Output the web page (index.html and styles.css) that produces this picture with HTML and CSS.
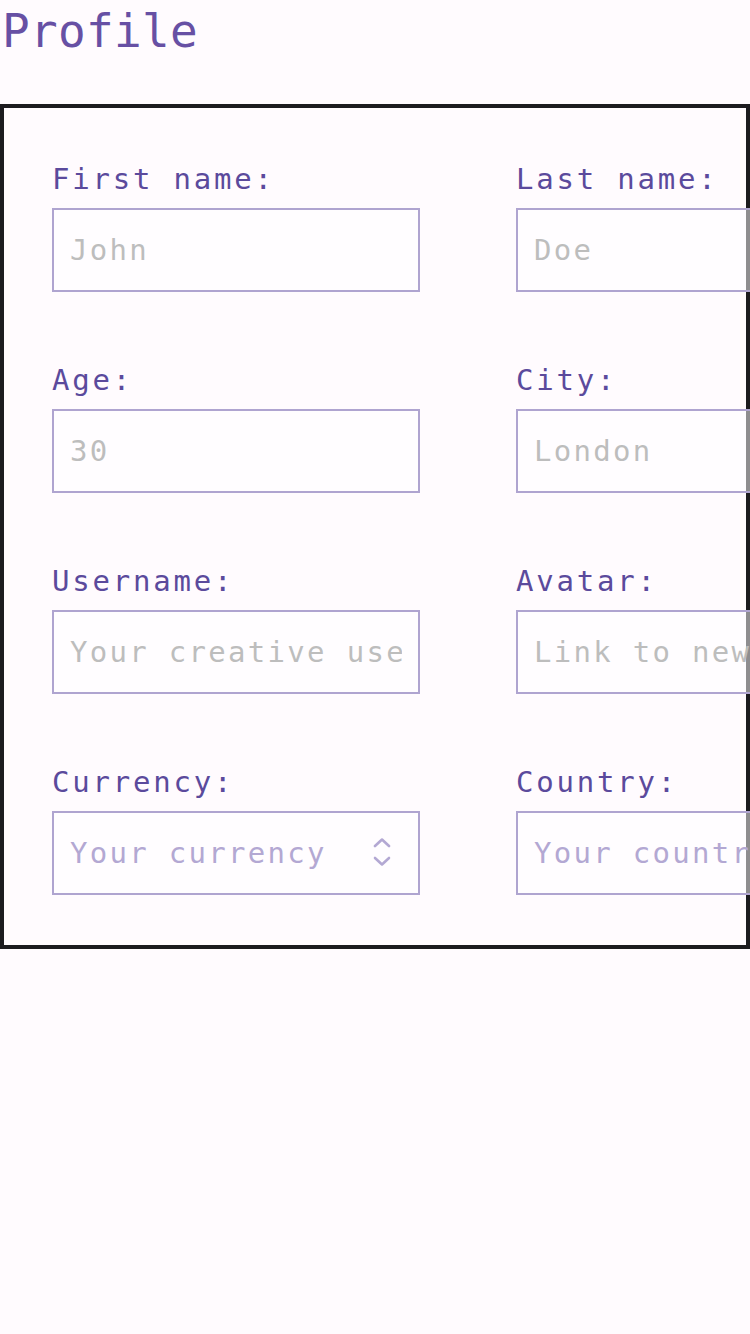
FILE: index.html
```html
<!DOCTYPE html>
<html lang="en">
<head>
  <meta charset="UTF-8">
  <meta name="viewport" content="width=device-width, initial-scale=1.0">
  <title>Profile</title>
  <link rel="stylesheet" href="styles.css">
</head>
<body>
  <h1 class="page-title">Profile</h1>

  <form class="profile-card">
    <!-- Row 1 -->
    <div class="field">
      <label class="field-label" for="first-name">First name:</label>
      <input class="field-input" id="first-name" type="text" placeholder="John">
    </div>
    <div class="field">
      <label class="field-label" for="last-name">Last name:</label>
      <input class="field-input" id="last-name" type="text" placeholder="Doe">
    </div>

    <!-- Row 2 -->
    <div class="field">
      <label class="field-label" for="age">Age:</label>
      <input class="field-input" id="age" type="text" placeholder="30">
    </div>
    <div class="field">
      <label class="field-label" for="city">City:</label>
      <input class="field-input" id="city" type="text" placeholder="London">
    </div>

    <!-- Row 3 -->
    <div class="field">
      <label class="field-label" for="username">Username:</label>
      <input class="field-input" id="username" type="text" placeholder="Your creative username">
    </div>
    <div class="field">
      <label class="field-label" for="avatar">Avatar:</label>
      <input class="field-input" id="avatar" type="text" placeholder="Link to new avatar">
    </div>

    <!-- Row 4: selects -->
    <div class="field">
      <label class="field-label" for="currency">Currency:</label>
      <div class="select-wrap">
        <select class="field-input field-select" id="currency">
          <option value="" selected disabled>Your currency</option>
          <option>GBP</option>
          <option>EUR</option>
          <option>USD</option>
        </select>
        <svg class="select-icon" width="18" height="30" viewBox="0 0 18 30" aria-hidden="true">
          <polyline points="2,8 9,1.5 16,8" />
          <polyline points="2,20 9,26.5 16,20" />
        </svg>
      </div>
    </div>
    <div class="field">
      <label class="field-label" for="country">Country:</label>
      <div class="select-wrap">
        <select class="field-input field-select" id="country">
          <option value="" selected disabled>Your country</option>
          <option>United Kingdom</option>
          <option>France</option>
          <option>Germany</option>
        </select>
        <svg class="select-icon" width="18" height="30" viewBox="0 0 18 30" aria-hidden="true">
          <polyline points="2,8 9,1.5 16,8" />
          <polyline points="2,20 9,26.5 16,20" />
        </svg>
      </div>
    </div>
  </form>
</body>
</html>
```

FILE: styles.css
```css
/* Page */
html {
  overflow-x: hidden;
}

body {
  margin: 0;
  background: #fffbfe;
  font-family: 'DejaVu Sans Mono', 'Liberation Mono', monospace;
  color: #5b4a9c;
}

/* Title */
.page-title {
  margin: 0 0 42px;
  padding-left: 2px;
  font-size: 46px;
  font-weight: normal;
  line-height: 62px;
  letter-spacing: 0.3px;
  color: #6750a4;
}

/* Card with the form grid */
.profile-card {
  display: grid;
  grid-template-columns: 368px 368px;
  column-gap: 96px;
  row-gap: 68px;
  padding: 51px 48px 50px;
  border: 4px solid #1c1b1f;
}

.field {
  display: flex;
  flex-direction: column;
  gap: 9px;
}

.field-label {
  font-size: 29px;
  line-height: 40px;
  letter-spacing: 2.8px;
}

/* Inputs */
.field-input {
  box-sizing: border-box;
  width: 368px;
  height: 84px;
  margin: 0;
  padding: 0 16px;
  border: 2px solid #afa4d0;
  border-radius: 0;
  background: rgba(255, 255, 255, 0.5);
  font-family: inherit;
  font-size: 29px;
  letter-spacing: 2.3px;
  color: #3a3a3a;
  outline: none;
}

.field-input::placeholder {
  color: #bdbdbd;
}

/* Selects */
.select-wrap {
  position: relative;
  width: 368px;
}

.field-select {
  appearance: none;
  -webkit-appearance: none;
  color: #b3a8d3;
}

.select-icon {
  position: absolute;
  top: 27px;
  left: 321px;
  pointer-events: none;
  fill: none;
  stroke: #b3a8d3;
  stroke-width: 2.6;
  stroke-linecap: round;
  stroke-linejoin: round;
}
```
